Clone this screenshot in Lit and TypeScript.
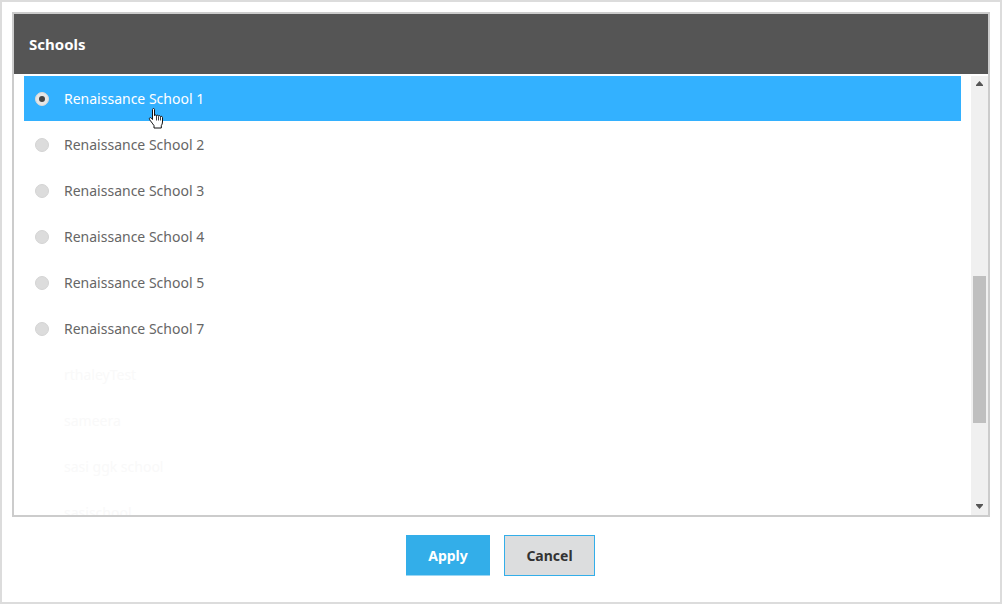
import { LitElement, html, css, svg } from "lit";
import { customElement } from "lit/decorators.js";

const FONT = `"Noto Sans", "Open Sans", sans-serif`;
const schools = [
  "Renaissance School 1",
  "Renaissance School 2",
  "Renaissance School 3",
  "Renaissance School 4",
  "Renaissance School 5",
  "Renaissance School 7",
];
const faded = ["rthaleyTest", "sameera", "sasi ggk school", "sasischool"];

@customElement("app-root")
export class AppRoot extends LitElement {
  static styles = css`
    :host {
      display: block;
      width: 1002px;
      height: 604px;
      font-family: "Noto Sans", "Open Sans", sans-serif;
    }
    * { box-sizing: border-box; }
    .page {
      width: 1002px;
      height: 604px;
      border: 2px solid #dcdcdc;
      background: #fff;
      padding: 10px 10px 0;
      display: flex;
      flex-direction: column;
      overflow: hidden;
    }
    .dialog {
      height: 505px;
      border: 2px solid #cccccc;
      border-bottom-width: 2px;
      display: flex;
      flex-direction: column;
      flex: none;
      background: #fff;
    }
    .header {
      height: 60px;
      flex: none;
      background: #555555;
      color: #fff;
      font-weight: 700;
      font-size: 15px;
      display: flex;
      align-items: center;
      padding-left: 15px;
    }
    .body {
      flex: 1;
      min-height: 0;
      display: flex;
      padding-top: 2px;
    }
    .list {
      flex: 1;
      min-width: 0;
      overflow: hidden;
      padding-left: 10px;
      padding-right: 10px;
      position: relative;
    }
    .row {
      height: 46px;
      display: flex;
      align-items: center;
      padding-left: 11px;
      gap: 15px;
      font-size: 14px;
      color: #666;
      padding-bottom: 1px;
      flex: none;
    }
    .row.sel {
      background: #33b1ff;
      color: #fff;
      height: 45px;
      margin-bottom: 1px;
      padding-bottom: 0;
    }
    .row.fade { color: #f9f9f9; }
    .radio {
      width: 14px;
      height: 14px;
      border-radius: 50%;
      background: #dcdcdc;
      border: 1px solid #d4d4d4;
      flex: none;
      display: flex;
      align-items: center;
      justify-content: center;
    }
    .row.sel .radio { background: #e6e6e6; border-color: #d9d9d9; }
    .row.sel .radio::after {
      content: "";
      width: 6px;
      height: 6px;
      border-radius: 50%;
      background: #444;
    }
    .row.fade .radio { visibility: hidden; }
    .scrollbar {
      width: 17px;
      flex: none;
      margin-top: -2px;
      background: #f0f0f0;
      display: flex;
      flex-direction: column;
      align-items: center;
      position: relative;
      border-top: 2px solid #fff;
      padding-top: 0;
    }
    .arrow { display: block; flex: none; margin-top: 5px; }
    .thumb {
      width: 13px;
      height: 147px;
      background: #bfbfbf;
      margin-top: 190px;
      flex: none;
    }
    .arrow.down { margin-top: auto; margin-bottom: 6px; }
    .actions {
      display: flex;
      justify-content: center;
      gap: 14px;
      padding-top: 18px;
      padding-right: 1px;
    }
    button {
      font-family: inherit;
      font-size: 14px;
      font-weight: 700;
      height: 41px;
      padding: 0;
      border-radius: 0;
      cursor: pointer;
    }
    .apply {
      width: 84px;
      background: #33aee9;
      color: #fff;
      border: none;
      border-bottom: 1px solid #9bd6f3;
    }
    .cancel {
      width: 91px;
      background: #dcddde;
      color: #333;
      border: 1px solid #33aee9;
    }
    .cursor {
      position: absolute;
      left: 134px;
      top: 32px;
      display: block;
    }
  `;

  render() {
    return html`
      <div class="page">
        <div class="dialog">
          <div class="header">Schools</div>
          <div class="body">
            <div class="list">
              ${schools.map(
                (s, i) => html`<div class="row ${i === 0 ? "sel" : ""}"><span class="radio"></span><span>${s}</span></div>`
              )}
              ${faded.map(
                (s) => html`<div class="row fade"><span class="radio"></span><span>${s}</span></div>`
              )}
              <svg class="cursor" width="17" height="22" viewBox="0 0 17 22">
                <path
                  d="M4.5 1.5c0-1.3 2-1.3 2 0v6.2c0-1 2-1 2 .2 0-1 2-1 2 .3 0-.8 2-.8 2 .5 0-.6 2-.6 2 .7v4.6c0 1.700-.6 2.600-1.200 3.600v2.400H6v-2.400c-1-1.400-2.400-3.400-4-5.400-1.100-1.400-.6-2.800.6-2.500.6.2 1.300 1 1.900 1.800z"
                  fill="#fff"
                  stroke="#111"
                  stroke-width="1"
                  stroke-linejoin="round"
                />
                <path d="M8.500 8v4.500M10.500 8.500v4M12.500 9v3.500" stroke="#111" stroke-width=".8" fill="none" />
              </svg>
            </div>
            <div class="scrollbar">
              <svg class="arrow" width="7" height="5" viewBox="0 0 7 5">${svg`<path d="M3.500 0 7 4v1H0V4z" fill="#555"/>`}</svg>
              <div class="thumb"></div>
              <svg class="arrow down" width="7" height="5" viewBox="0 0 7 5">${svg`<path d="M0 0h7v1L3.500 5 0 1z" fill="#555"/>`}</svg>
            </div>
          </div>
        </div>
        <div class="actions">
          <button class="apply">Apply</button>
          <button class="cancel">Cancel</button>
        </div>
      </div>
    `;
  }
}
void FONT;
